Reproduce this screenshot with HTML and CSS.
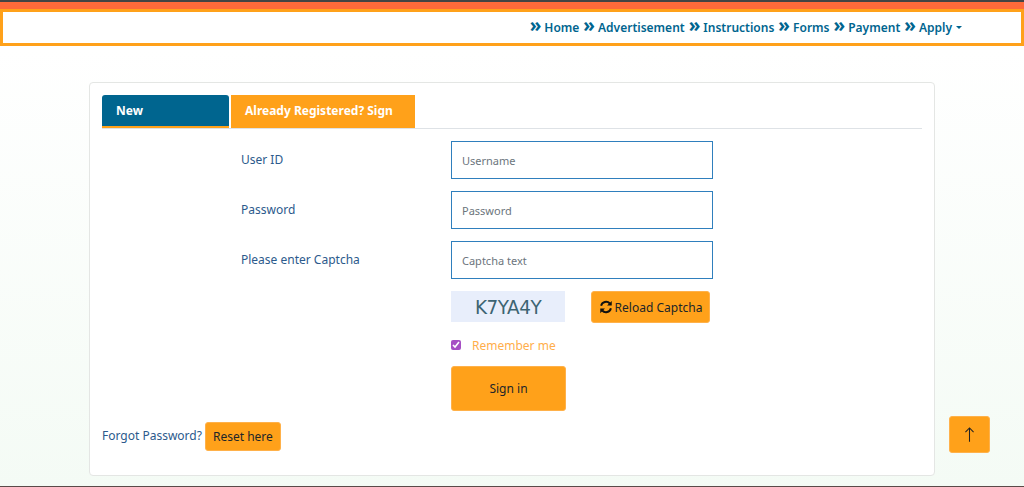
FILE: index.html
```html
<!DOCTYPE html>
<html lang="en">
<head>
    <meta charset="UTF-8">
    <meta name="viewport" content="width=device-width, initial-scale=1.0">
    <title>Sign In</title>
    <link rel="stylesheet" href="styles.css">
</head>
<body>
    <div class="topbar"></div>
    <nav class="navbar">
        <a class="nav-link" href="#"><span class="chev">&raquo;</span>Home</a>
        <a class="nav-link" href="#"><span class="chev">&raquo;</span>Advertisement</a>
        <a class="nav-link" href="#"><span class="chev">&raquo;</span>Instructions</a>
        <a class="nav-link" href="#"><span class="chev">&raquo;</span>Forms</a>
        <a class="nav-link" href="#"><span class="chev">&raquo;</span>Payment</a>
        <a class="nav-link" href="#"><span class="chev">&raquo;</span>Apply<i class="caret"></i></a>
    </nav>
    <main class="card">
        <ul class="tabs">
            <li class="tab tab-new">New Registration</li>
            <li class="tab tab-active">Already Registered? Sign In</li>
        </ul>
        <form class="login">
            <label class="field-label">User ID</label>
            <input class="field-input" type="text" placeholder="Username">
            <label class="field-label">Password</label>
            <input class="field-input" type="text" placeholder="Password">
            <label class="field-label">Please enter Captcha</label>
            <input class="field-input" type="text" placeholder="Captcha text">
            <div class="captcha-row">
                <div class="captcha"><span class="captcha-text">K7YA4Y</span></div>
                <button type="button" class="btn btn-reload">
                    <svg class="reload-icon" viewBox="0 0 16 16" width="14" height="14">
                        <path d="M2.4 6.6A5.8 5.8 0 0 1 12.4 4" fill="none" stroke="#111" stroke-width="2.2"/>
                        <path d="M14.6 1v5.4H9.2z" fill="#111"/>
                        <path d="M13.6 9.4A5.8 5.8 0 0 1 3.6 12" fill="none" stroke="#111" stroke-width="2.2"/>
                        <path d="M1.4 15V9.6h5.4z" fill="#111"/>
                    </svg>
                    Reload Captcha
                </button>
            </div>
            <label class="remember"><input class="check" type="checkbox" checked>Remember me</label>
            <button type="button" class="btn btn-signin">Sign in</button>
        </form>
        <div class="forgot">
            <span class="forgot-text">Forgot Password?</span>
            <button type="button" class="btn btn-reset">Reset here</button>
        </div>
    </main>
    <button type="button" class="btn to-top">
        <svg viewBox="0 0 16 20" width="13" height="17"><path d="M8 19V2M3 7l5-5 5 5" fill="none" stroke="#222" stroke-width="1.3"/></svg>
    </button>
    <div class="bottom-line"></div>
</body>
</html>
```

FILE: styles.css
```css
* {
    margin: 0;
    padding: 0;
    box-sizing: border-box;
}
html, body {
    height: 487px;
    overflow: hidden;
}
body {
    font-family: "Noto Sans", "Open Sans", sans-serif;
    font-size: 13px;
    color: #212529;
    background: linear-gradient(#ffffff 50px, #f4fbf5 100%);
    position: relative;
}
ul {
    list-style: none;
}
.topbar {
    height: 9px;
    background-color: #ff6a3a;
    border-top: 2px solid #444;
}
.navbar {
    display: flex;
    justify-content: flex-end;
    align-items: center;
    height: 37px;
    margin-top: 0;
    padding-right: 59px;
    gap: 4px;
    background-color: #fff;
    border: 3px solid #ffa11a;
}
.nav-link {
    color: #00658f;
    font-weight: 600;
    font-size: 12px;
    text-decoration: none;
    display: flex;
    align-items: center;
}
.chev {
    font-size: 19px;
    line-height: 14px;
    margin-right: 3px;
    margin-top: -5px;
    font-weight: 700;
}
.caret {
    display: inline-block;
    margin-left: 4px;
    border-top: 3px solid #00658f;
    border-left: 3px solid transparent;
    border-right: 3px solid transparent;
}
.card {
    width: 846px;
    height: 394px;
    margin: 36px 0 0 89px;
    padding: 12px;
    background-color: #fff;
    border: 1px solid #e4e6e4;
    border-radius: 4px;
}
.tabs {
    display: flex;
    gap: 2px;
    height: 34px;
    border-bottom: 1px solid #dee2e6;
}
.tab {
    height: 33px;
    padding: 0 14px;
    font-size: 12px;
    font-weight: 700;
    line-height: 32px;
    color: #fff;
    border-bottom: 2px solid #ffa11a;
}
.tab-new {
    width: 127px;
    background-color: #00658f;
    border-radius: 3px 3px 0 0;
}
.tab-active {
    width: 184px;
    background-color: #ffa11a;
}
.login {
    display: grid;
    grid-template-columns: 210px 262px;
    grid-auto-rows: min-content;
    row-gap: 12px;
    margin: 12px 0 0 139px;
}
.field-label {
    font-size: 12px;
    line-height: 38px;
    color: #2c5a8c;
}
.field-input {
    width: 262px;
    height: 38px;
    padding: 0 10px;
    font: inherit;
    font-size: 11px;
    color: #333;
    border: 1px solid #2f7fbd;
    background-color: #fff;
}
.field-input::placeholder {
    color: #6c757d;
    opacity: 1;
}
.captcha-row {
    grid-column: 2;
    display: flex;
    align-items: flex-start;
    gap: 26px;
    height: 32px;
}
.captcha {
    width: 114px;
    height: 31px;
    display: flex;
    justify-content: center;
    align-items: center;
    background-color: #e8eefb;
}
.captcha-text {
    font-family: "DejaVu Sans", sans-serif;
    font-size: 20px;
    letter-spacing: -0.5px;
    color: #3c6472;
    transform: scaleX(0.92);
}
.btn {
    font: inherit;
    color: #212529;
    background-color: #ffa11a;
    border: 1px solid #ffb14a;
    border-radius: 3px;
    cursor: pointer;
}
.btn-reload {
    width: 119px;
    height: 32px;
    font-size: 12px;
    display: flex;
    align-items: center;
    justify-content: center;
    gap: 2px;
}
.remember {
    grid-column: 2;
    display: flex;
    align-items: center;
    height: 18px;
    margin-top: 1px;
    font-size: 12px;
    color: #ffae4a;
}
.check {
    width: 10px;
    height: 10px;
    margin-right: 11px;
    accent-color: #a64fc4;
}
.btn-signin {
    grid-column: 2;
    width: 115px;
    height: 45px;
    font-size: 12px;
    margin-top: 0;
}
.forgot {
    display: flex;
    align-items: center;
    gap: 3px;
    margin-top: 11px;
}
.forgot-text {
    font-size: 12px;
    color: #2c5a8c;
    margin-top: -2px;
}
.btn-reset {
    width: 76px;
    height: 29px;
    font-size: 12px;
}
.to-top {
    position: absolute;
    left: 949px;
    top: 416px;
    width: 41px;
    height: 37px;
    display: flex;
    align-items: center;
    justify-content: center;
}
.bottom-line {
    position: absolute;
    left: 0;
    right: 0;
    bottom: 0;
    height: 1px;
    background-color: #5a4a48;
}
```
